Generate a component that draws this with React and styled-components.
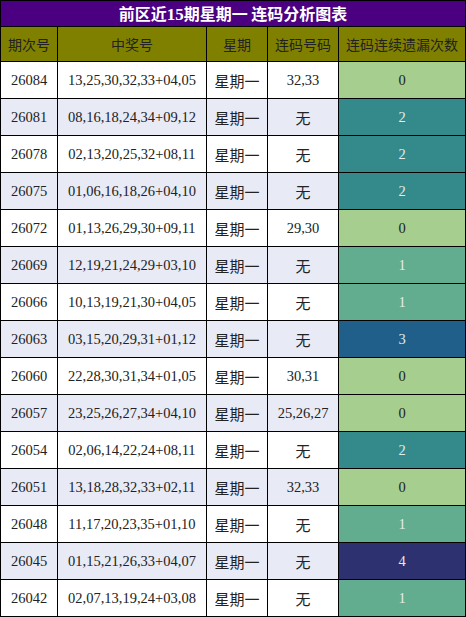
import styled, { createGlobalStyle } from "styled-components";

const GlobalStyle = createGlobalStyle`
  html, body {
    margin: 0;
    padding: 0;
    background: #ffffff;
  }
`;

const StyledTable = styled.table`
  width: 465px;
  border-collapse: collapse;
  table-layout: fixed;
  font-family: "Liberation Serif", "Noto Sans CJK SC", serif;
  color: #222;
`;

const StyledTitle = styled.th`
  height: 25px;
  padding: 0;
  background: #4b0082;
  color: #ffffff;
  font-family: "Noto Sans CJK SC", sans-serif;
  font-size: 16px;
  font-weight: bold;
  border: 1px solid #000;
  line-height: 22px;

  span {
    font-family: "Liberation Serif", serif;
    font-size: 17px;
  }
`;

const StyledHead = styled.th`
  height: 34px;
  padding: 0;
  background: #808000;
  color: #222;
  font-family: "Noto Sans CJK SC", sans-serif;
  font-size: 14px;
  font-weight: normal;
  border: 1px solid #000;
`;

const StyledRow = styled.tr`
  background: ${(props) => (props.alt ? "#e8eaf6" : "#ffffff")};
`;

const StyledCell = styled.td`
  height: 36px;
  padding: 0;
  text-align: center;
  border: 1px solid #000;
  font-size: ${(props) => (props.cjk ? "15px" : "14.5px")};
  font-family: ${(props) =>
    props.cjk
      ? `"Noto Sans CJK SC", sans-serif`
      : `"Liberation Serif", "Noto Sans CJK SC", serif`};
`;

const countColors = {
  0: { bg: "#a6cf8f", fg: "#222" },
  1: { bg: "#62ad8f", fg: "#e4ece8" },
  2: { bg: "#348a8b", fg: "#e4ece8" },
  3: { bg: "#1f5f8a", fg: "#e4ece8" },
  4: { bg: "#2e3170", fg: "#e4ece8" },
};

const StyledCount = styled.td`
  height: 36px;
  padding: 0;
  text-align: center;
  border: 1px solid #000;
  font-size: 14.5px;
  background: ${(props) => countColors[props.n].bg};
  color: ${(props) => countColors[props.n].fg};
`;

const rows = [
  ["26084", "13,25,30,32,33+04,05", "32,33", 0],
  ["26081", "08,16,18,24,34+09,12", "无", 2],
  ["26078", "02,13,20,25,32+08,11", "无", 2],
  ["26075", "01,06,16,18,26+04,10", "无", 2],
  ["26072", "01,13,26,29,30+09,11", "29,30", 0],
  ["26069", "12,19,21,24,29+03,10", "无", 1],
  ["26066", "10,13,19,21,30+04,05", "无", 1],
  ["26063", "03,15,20,29,31+01,12", "无", 3],
  ["26060", "22,28,30,31,34+01,05", "30,31", 0],
  ["26057", "23,25,26,27,34+04,10", "25,26,27", 0],
  ["26054", "02,06,14,22,24+08,11", "无", 2],
  ["26051", "13,18,28,32,33+02,11", "32,33", 0],
  ["26048", "11,17,20,23,35+01,10", "无", 1],
  ["26045", "01,15,21,26,33+04,07", "无", 4],
  ["26042", "02,07,13,19,24+03,08", "无", 1],
];

export default function App() {
  return (
    <>
      <GlobalStyle />
      <StyledTable>
        <colgroup>
          <col style={{ width: 57 }} />
          <col style={{ width: 149 }} />
          <col style={{ width: 61 }} />
          <col style={{ width: 71 }} />
          <col style={{ width: 127 }} />
        </colgroup>
        <thead>
          <tr>
            <StyledTitle colSpan={5}>
              前区近<span>15</span>期星期一 连码分析图表
            </StyledTitle>
          </tr>
          <tr>
            <StyledHead>期次号</StyledHead>
            <StyledHead>中奖号</StyledHead>
            <StyledHead>星期</StyledHead>
            <StyledHead>连码号码</StyledHead>
            <StyledHead>连码连续遗漏次数</StyledHead>
          </tr>
        </thead>
        <tbody>
          {rows.map(([issue, nums, pair, n], i) => (
            <StyledRow key={issue} alt={i % 2 === 1}>
              <StyledCell>{issue}</StyledCell>
              <StyledCell>{nums}</StyledCell>
              <StyledCell cjk>星期一</StyledCell>
              <StyledCell cjk={pair === "无"}>{pair}</StyledCell>
              <StyledCount n={n}>{n}</StyledCount>
            </StyledRow>
          ))}
        </tbody>
      </StyledTable>
    </>
  );
}
